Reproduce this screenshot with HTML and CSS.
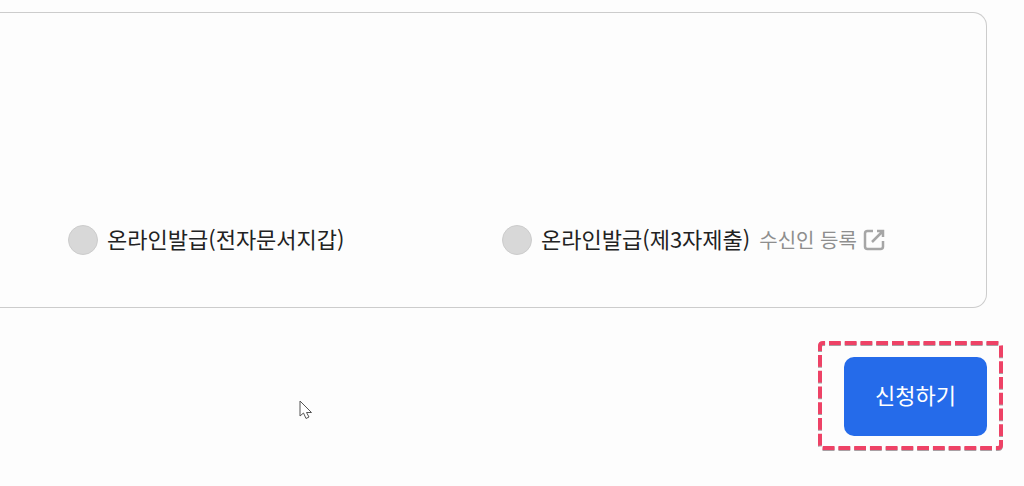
FILE: index.html
```
<!DOCTYPE html>
<html lang="ko">
  <head>
    <meta charset="utf-8">
    <meta name="viewport" content="width=device-width, initial-scale=1">
    <title>신청하기</title>
    <link rel="stylesheet" href="styles.css">
  </head>
  <body>
    <form class="apply-form">
      <div class="form-box">
        <div class="receive-list">
          <div class="receive-item">
            <input type="radio" id="receiveWallet" name="receive" value="wallet">
            <label for="receiveWallet">온라인발급(전자문서지갑)</label>
          </div>
          <div class="receive-item">
            <input type="radio" id="receiveThird" name="receive" value="third">
            <label for="receiveThird">온라인발급(제3자제출)</label>
            <a href="#" class="link-register">수신인 등록
              <svg class="icon-link" viewBox="0 0 22 22" aria-hidden="true">
                <path d="M10 2H4.500Q2 2 2 4.500V17.500Q2 20 4.500 20H17.500Q20 20 20 17.500V12M14 2H20V8M20 2L9 13"/>
              </svg>
            </a>
          </div>
        </div>
      </div>
      <div class="btn-area">
        <div class="btn-guide">
          <button type="button" class="btn-apply">신청하기</button>
          <svg class="guide-line" viewBox="0 0 185 111" aria-hidden="true">
            <path pathLength="576" d="M11 3H180Q183 3 183 6V105Q183 108 180 108H5Q2 108 2 105V6Q2 3 5 3Z"/>
          </svg>
        </div>
      </div>
    </form>
    <svg class="cursor" viewBox="0 0 14 20" aria-hidden="true">
      <path d="M1 1V16L4.500 13L7 18.500L10 17L7.500 12.500H12.500Z"/>
    </svg>
  </body>
</html>
```
FILE: styles.css
```
* {
box-sizing: border-box;
}
body {
margin: 0;
background: #fdfdfd;
color: #222;
font-family: "Noto Sans CJK KR", sans-serif;
font-size: 22px;
line-height: 32px;
}
.apply-form {
padding: 12px 37px 32px 0;
}
.form-box {
padding: 211px 50px 51px 68px;
border: 1px solid #ccc;
border-left: none;
border-radius: 0 14px 14px 0;
}
.receive-list {
display: grid;
grid-template-columns: 1fr 1fr;
}
.receive-item {
display: flex;
align-items: center;
white-space: nowrap;
}
.receive-item label {
padding-bottom: 4px;
line-height: 28px;
}
.receive-item input {
appearance: none;
flex: none;
width: 30px;
height: 30px;
margin: 0 9px 0 0;
border: 1px solid #ccc;
border-radius: 50%;
background: #d8d8d8;
}
.receive-item input:checked {
border: 9px solid #256bea;
background: #fff;
}
.link-register {
display: flex;
align-items: center;
gap: 6px;
margin-left: 9px;
color: #8e8e8e;
font-size: 20px;
text-decoration: none;
}
.icon-link {
width: 22px;
height: 22px;
fill: none;
stroke: #a6a6a6;
stroke-width: 2.5;
}
.btn-area {
display: flex;
justify-content: flex-end;
margin-top: 49px;
}
.btn-guide {
position: relative;
}
.btn-apply {
display: block;
padding: 21px 31px 26px;
border: none;
border-radius: 10px;
background: #256bea;
color: #fff;
font-family: inherit;
font-size: 22px;
line-height: 32px;
cursor: pointer;
}
.btn-apply:hover {
background: #1d5fd8;
}
/* dashed guide around the button */
.guide-line {
position: absolute;
top: -17px;
left: -26px;
width: 185px;
height: 111px;
overflow: visible;
fill: none;
stroke: #ee4266;
stroke-width: 4;
stroke-dasharray: 12 4;
filter: drop-shadow(0 1px 0 #a9a0a4);
pointer-events: none;
}
.cursor {
position: absolute;
top: 400px;
left: 299px;
width: 14px;
height: 20px;
fill: #fff;
stroke: #555;
stroke-width: 1;
}
```
